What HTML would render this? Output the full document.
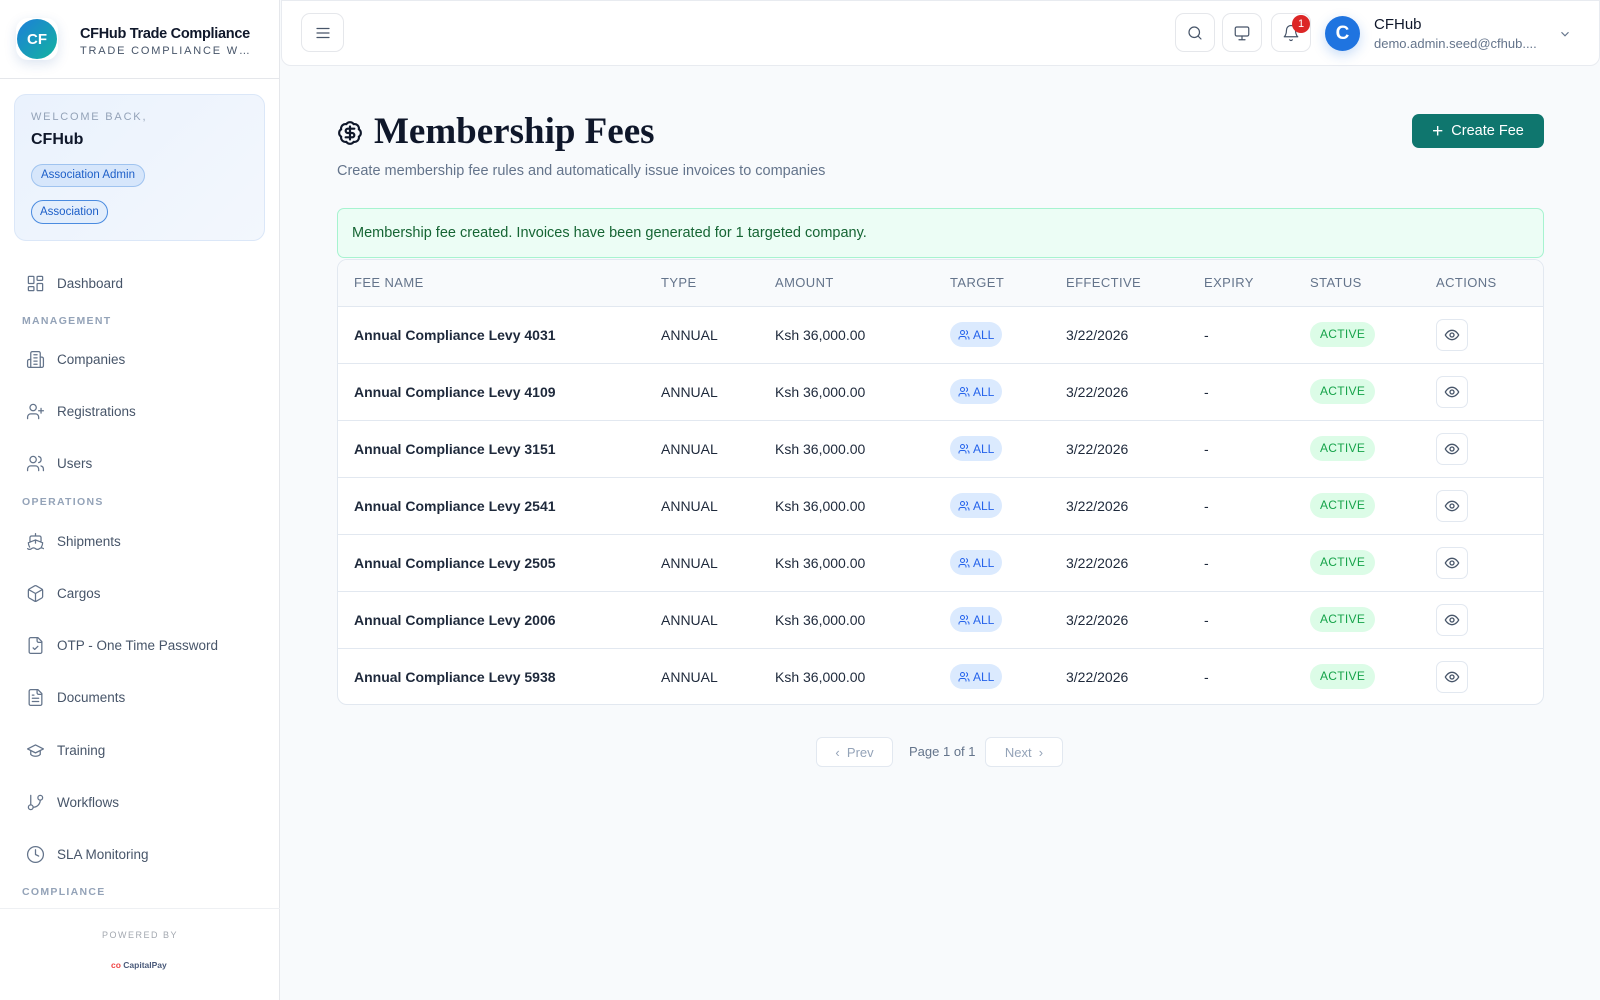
<!DOCTYPE html>
<html><head><meta charset="utf-8">
<style>
*{box-sizing:border-box;margin:0;padding:0}
body{width:1600px;height:1000px;overflow:hidden;background:#f8fafc;font-family:"Liberation Sans",sans-serif;color:#0f172a;position:relative}
.abs{position:absolute}
.sb{position:absolute;left:0;top:0;width:280px;height:1000px;background:#fff;border-right:1px solid #e5e7eb}
.nav{position:absolute;left:26px;display:flex;align-items:center;font-size:13.5px;color:#475569}
.nav svg{width:19px;height:19px;margin-right:12px;stroke:#64748b;fill:none;stroke-width:1.6;stroke-linecap:round;stroke-linejoin:round}
.sec{position:absolute;left:22px;font-size:10.5px;letter-spacing:1.3px;color:#94a3b8;font-weight:bold}
.ib{position:absolute;top:13px;width:40px;height:39px;border:1px solid #e5e7eb;border-radius:9px;background:#fff;display:flex;align-items:center;justify-content:center}
.ib svg{width:18px;height:18px;stroke:#475569;fill:none;stroke-width:1.6;stroke-linecap:round;stroke-linejoin:round}
table{border-collapse:collapse;width:100%}
th{height:46px;text-align:left;font-size:13px;color:#64748b;font-weight:normal;letter-spacing:.4px;background:#f8fafc;border-bottom:1px solid #e2e8f0}
td{height:57px;font-size:14px;color:#1e293b;border-bottom:1px solid #e2e8f0}
tr:last-child td{border-bottom:none}
.all{display:inline-flex;align-items:center;background:#dbeafe;color:#2563eb;font-size:12px;padding:0 8px;height:25px;border-radius:13px}
.all svg{margin-right:3px}
.act{display:inline-block;background:#dcfce7;color:#16a34a;font-size:12px;padding:0 10px;height:25px;line-height:25px;border-radius:13px;letter-spacing:.3px}
.eye{width:32px;height:32px;border:1px solid #e2e8f0;border-radius:7px;display:flex;align-items:center;justify-content:center;background:#fff}
</style></head><body>
<div class="sb">
  <div class="abs" style="left:16px;top:18px;width:42px;height:42px;border-radius:12px;background:#fff;box-shadow:0 4px 12px rgba(30,80,160,.15)"></div>
  <div class="abs" style="left:17px;top:19px;width:40px;height:40px;border-radius:50%;background:linear-gradient(135deg,#1d7fd8,#13b3a0);color:#fff;font-weight:bold;font-size:15px;display:flex;align-items:center;justify-content:center">CF</div>
  <div class="abs" style="left:80px;top:26px;font-size:14.5px;letter-spacing:-.3px;color:#0f172a;font-weight:bold">CFHub Trade Compliance</div>
  <div class="abs" style="left:80px;top:45px;font-size:11px;letter-spacing:1.8px;color:#475569">TRADE COMPLIANCE W…</div>
  <div class="abs" style="left:0;top:78px;width:280px;height:1px;background:#e5e7eb"></div>
  <div class="abs" style="left:14px;top:94px;width:251px;height:147px;border:1px solid #dbe7f8;border-radius:12px;background:linear-gradient(135deg,#eaf2fd,#f3f7fd)"></div>
  <div class="abs" style="left:31px;top:111px;font-size:11px;letter-spacing:1.8px;color:#94a3b8">WELCOME BACK,</div>
  <div class="abs" style="left:31px;top:131px;font-size:16px;font-weight:bold">CFHub</div>
  <div class="abs" style="left:31px;top:164px;height:23px;padding:0 9px;border:1px solid #9fc3ef;border-radius:12px;background:#d6e6fb;color:#1d5fc8;font-size:11.5px;line-height:21px">Association Admin</div>
  <div class="abs" style="left:31px;top:200px;height:24px;padding:0 8px;border:1px solid #4a8be0;border-radius:12px;background:#e3eefc;color:#1d5fc8;font-size:11.5px;line-height:22px">Association</div>

  <div class="nav" style="top:274px"><svg viewBox="0 0 24 24"><rect x="3" y="3" width="7" height="9" rx="1"/><rect x="14" y="3" width="7" height="5" rx="1"/><rect x="14" y="12" width="7" height="9" rx="1"/><rect x="3" y="16" width="7" height="5" rx="1"/></svg>Dashboard</div>
  <div class="sec" style="top:315px">MANAGEMENT</div>
  <div class="nav" style="top:350px"><svg viewBox="0 0 24 24"><path d="M6 22V4a2 2 0 0 1 2-2h8a2 2 0 0 1 2 2v18Z"/><path d="M6 12H4a2 2 0 0 0-2 2v6a2 2 0 0 0 2 2h2M18 9h2a2 2 0 0 1 2 2v9a2 2 0 0 1-2 2h-2M10 6h4M10 10h4M10 14h4M10 18h4"/></svg>Companies</div>
  <div class="nav" style="top:402px"><svg viewBox="0 0 24 24"><path d="M16 21v-2a4 4 0 0 0-4-4H6a4 4 0 0 0-4 4v2"/><circle cx="9" cy="7" r="4"/><path d="M19 8v6M22 11h-6"/></svg>Registrations</div>
  <div class="nav" style="top:454px"><svg viewBox="0 0 24 24"><path d="M16 21v-2a4 4 0 0 0-4-4H6a4 4 0 0 0-4 4v2"/><circle cx="9" cy="7" r="4"/><path d="M22 21v-2a4 4 0 0 0-3-3.9M16 3.1a4 4 0 0 1 0 7.8"/></svg>Users</div>
  <div class="sec" style="top:496px">OPERATIONS</div>
  <div class="nav" style="top:532px"><svg viewBox="0 0 24 24"><path d="M2 21c.6.5 1.2 1 2.5 1 2.5 0 2.5-2 5-2 1.3 0 1.9.5 2.5 1s1.2 1 2.5 1c2.5 0 2.5-2 5-2 1.3 0 1.9.5 2.5 1"/><path d="M19.4 19a10 10 0 0 0 1.6-5.5L12 10l-9 3.5A10 10 0 0 0 4.6 19M19 13V7a2 2 0 0 0-2-2H7a2 2 0 0 0-2 2v6M12 10v4M12 2v3"/></svg>Shipments</div>
  <div class="nav" style="top:584px"><svg viewBox="0 0 24 24"><path d="M21 8a2 2 0 0 0-1-1.7l-7-4a2 2 0 0 0-2 0l-7 4A2 2 0 0 0 3 8v8a2 2 0 0 0 1 1.7l7 4a2 2 0 0 0 2 0l7-4a2 2 0 0 0 1-1.7Z"/><path d="M3.3 7 12 12l8.7-5M12 22V12"/></svg>Cargos</div>
  <div class="nav" style="top:636px"><svg viewBox="0 0 24 24"><path d="M15 2H6a2 2 0 0 0-2 2v16a2 2 0 0 0 2 2h12a2 2 0 0 0 2-2V7Z"/><path d="M14 2v4a2 2 0 0 0 2 2h4M9 15l2 2 4-4"/></svg>OTP - One Time Password</div>
  <div class="nav" style="top:688px"><svg viewBox="0 0 24 24"><path d="M15 2H6a2 2 0 0 0-2 2v16a2 2 0 0 0 2 2h12a2 2 0 0 0 2-2V7Z"/><path d="M14 2v4a2 2 0 0 0 2 2h4M10 9H8M16 13H8M16 17H8"/></svg>Documents</div>
  <div class="nav" style="top:741px"><svg viewBox="0 0 24 24"><path d="M22 10 12 5 2 10l10 5 10-5Z"/><path d="M6 12v5c3 3 9 3 12 0v-5"/></svg>Training</div>
  <div class="nav" style="top:793px"><svg viewBox="0 0 24 24"><path d="M6 3v12"/><circle cx="18" cy="6" r="3"/><circle cx="6" cy="18" r="3"/><path d="M18 9a9 9 0 0 1-9 9"/></svg>Workflows</div>
  <div class="nav" style="top:845px"><svg viewBox="0 0 24 24"><circle cx="12" cy="12" r="10"/><path d="M12 6v6l4 2"/></svg>SLA Monitoring</div>
  <div class="sec" style="top:886px">COMPLIANCE</div>
  <div class="abs" style="left:0;top:908px;width:280px;height:1px;background:#eef0f3"></div>
  <div class="abs" style="left:0;top:930px;width:280px;text-align:center;font-size:9px;letter-spacing:1.5px;color:#a3a8b0">POWERED BY</div>
  <div class="abs" style="left:111px;top:960px;font-size:8.5px;font-weight:bold;color:#4a5a7a"><span style="color:#ef4444">co</span> CapitalPay</div>
</div>

<div class="abs" style="left:281px;top:0;width:1319px;height:66px;background:#fff;border:1px solid #e8ebf0;border-radius:0 0 10px 10px"></div>
<div class="ib" style="left:301px;width:43px"><svg viewBox="0 0 24 24"><path d="M4 6h16M4 12h16M4 18h16"/></svg></div>
<div class="ib" style="left:1175px"><svg viewBox="0 0 24 24"><circle cx="11" cy="11" r="7"/><path d="m20 20-4-4"/></svg></div>
<div class="ib" style="left:1222px"><svg viewBox="0 0 24 24"><rect x="3" y="4" width="18" height="12" rx="2"/><path d="M8 21h8M12 16v5"/></svg></div>
<div class="ib" style="left:1271px"><svg viewBox="0 0 24 24"><path d="M6 8a6 6 0 0 1 12 0c0 7 3 9 3 9H3s3-2 3-9"/><path d="M10.3 21a1.9 1.9 0 0 0 3.4 0"/></svg></div>
<div class="abs" style="left:1292px;top:15px;width:18px;height:18px;border-radius:50%;background:#dc2626;color:#fff;font-size:11px;text-align:center;line-height:18px">1</div>
<div class="abs" style="left:1325px;top:16px;width:35px;height:35px;border-radius:50%;background:#1f74e0;color:#fff;font-size:19px;font-weight:bold;text-align:center;line-height:35px;box-shadow:0 4px 12px rgba(31,116,224,.25)">C</div>
<div class="abs" style="left:1374px;top:16px;font-size:15px;color:#0f172a">CFHub</div>
<div class="abs" style="left:1374px;top:36px;font-size:13px;color:#64748b">demo.admin.seed@cfhub....</div>
<svg class="abs" style="left:1558px;top:27px" width="14" height="14" viewBox="0 0 24 24" fill="none" stroke="#64748b" stroke-width="2"><path d="m6 9 6 6 6-6"/></svg>

<svg class="abs" style="left:337px;top:120px" width="26" height="26" viewBox="0 0 24 24" fill="none" stroke="#0f172a" stroke-width="2" stroke-linecap="round" stroke-linejoin="round"><path d="M3.85 8.62a4 4 0 0 1 4.78-4.77 4 4 0 0 1 6.74 0 4 4 0 0 1 4.78 4.78 4 4 0 0 1 0 6.74 4 4 0 0 1-4.77 4.78 4 4 0 0 1-6.75 0 4 4 0 0 1-4.78-4.77 4 4 0 0 1 0-6.76Z"/><path d="M16 8h-6a2 2 0 1 0 0 4h4a2 2 0 1 1 0 4H8M12 18V6"/></svg>
<div class="abs" style="left:374px;top:110px;font-family:'Liberation Serif',serif;font-weight:bold;font-size:37px;color:#0f172a;letter-spacing:0">Membership Fees</div>
<div class="abs" style="left:337px;top:163px;font-size:14.5px;color:#64748b">Create membership fee rules and automatically issue invoices to companies</div>
<div class="abs" style="left:1412px;top:114px;width:132px;height:34px;border-radius:7px;background:#0f766e;color:#fff;font-size:14.5px;display:flex;align-items:center;justify-content:center"><span style="font-size:19px;margin-right:8px;line-height:1">+</span>Create Fee</div>

<div class="abs" style="left:337px;top:208px;width:1207px;height:50px;border:1px solid #a7f3d0;border-radius:7px;background:#ecfdf5;color:#166534;font-size:14.5px;padding-left:14px;line-height:48px">Membership fee created. Invoices have been generated for 1 targeted company.</div>

<div class="abs" style="left:337px;top:259px;width:1207px;height:446px;border:1px solid #e2e8f0;border-radius:10px;background:#fff;overflow:hidden">
<table>
<colgroup><col style="width:323px"><col style="width:114px"><col style="width:175px"><col style="width:116px"><col style="width:138px"><col style="width:106px"><col style="width:126px"><col></colgroup>
<tr><th style="padding-left:16px">FEE NAME</th><th>TYPE</th><th>AMOUNT</th><th>TARGET</th><th>EFFECTIVE</th><th>EXPIRY</th><th>STATUS</th><th>ACTIONS</th></tr>
<tr><td style="padding-left:16px;font-weight:bold">Annual Compliance Levy 4031</td><td>ANNUAL</td><td>Ksh 36,000.00</td><td><span class="all"><svg width="12" height="12" viewBox="0 0 24 24" fill="none" stroke="#2563eb" stroke-width="2"><path d="M16 21v-2a4 4 0 0 0-4-4H6a4 4 0 0 0-4 4v2"/><circle cx="9" cy="7" r="4"/><path d="M22 21v-2a4 4 0 0 0-3-3.9M16 3.1a4 4 0 0 1 0 7.8"/></svg>ALL</span></td><td>3/22/2026</td><td>-</td><td><span class="act">ACTIVE</span></td><td><div class="eye"><svg width="16" height="16" viewBox="0 0 24 24" fill="none" stroke="#475569" stroke-width="2"><path d="M2 12s3.5-7 10-7 10 7 10 7-3.5 7-10 7S2 12 2 12Z"/><circle cx="12" cy="12" r="3"/></svg></div></td></tr>
<tr><td style="padding-left:16px;font-weight:bold">Annual Compliance Levy 4109</td><td>ANNUAL</td><td>Ksh 36,000.00</td><td><span class="all"><svg width="12" height="12" viewBox="0 0 24 24" fill="none" stroke="#2563eb" stroke-width="2"><path d="M16 21v-2a4 4 0 0 0-4-4H6a4 4 0 0 0-4 4v2"/><circle cx="9" cy="7" r="4"/><path d="M22 21v-2a4 4 0 0 0-3-3.9M16 3.1a4 4 0 0 1 0 7.8"/></svg>ALL</span></td><td>3/22/2026</td><td>-</td><td><span class="act">ACTIVE</span></td><td><div class="eye"><svg width="16" height="16" viewBox="0 0 24 24" fill="none" stroke="#475569" stroke-width="2"><path d="M2 12s3.5-7 10-7 10 7 10 7-3.5 7-10 7S2 12 2 12Z"/><circle cx="12" cy="12" r="3"/></svg></div></td></tr>
<tr><td style="padding-left:16px;font-weight:bold">Annual Compliance Levy 3151</td><td>ANNUAL</td><td>Ksh 36,000.00</td><td><span class="all"><svg width="12" height="12" viewBox="0 0 24 24" fill="none" stroke="#2563eb" stroke-width="2"><path d="M16 21v-2a4 4 0 0 0-4-4H6a4 4 0 0 0-4 4v2"/><circle cx="9" cy="7" r="4"/><path d="M22 21v-2a4 4 0 0 0-3-3.9M16 3.1a4 4 0 0 1 0 7.8"/></svg>ALL</span></td><td>3/22/2026</td><td>-</td><td><span class="act">ACTIVE</span></td><td><div class="eye"><svg width="16" height="16" viewBox="0 0 24 24" fill="none" stroke="#475569" stroke-width="2"><path d="M2 12s3.5-7 10-7 10 7 10 7-3.5 7-10 7S2 12 2 12Z"/><circle cx="12" cy="12" r="3"/></svg></div></td></tr>
<tr><td style="padding-left:16px;font-weight:bold">Annual Compliance Levy 2541</td><td>ANNUAL</td><td>Ksh 36,000.00</td><td><span class="all"><svg width="12" height="12" viewBox="0 0 24 24" fill="none" stroke="#2563eb" stroke-width="2"><path d="M16 21v-2a4 4 0 0 0-4-4H6a4 4 0 0 0-4 4v2"/><circle cx="9" cy="7" r="4"/><path d="M22 21v-2a4 4 0 0 0-3-3.9M16 3.1a4 4 0 0 1 0 7.8"/></svg>ALL</span></td><td>3/22/2026</td><td>-</td><td><span class="act">ACTIVE</span></td><td><div class="eye"><svg width="16" height="16" viewBox="0 0 24 24" fill="none" stroke="#475569" stroke-width="2"><path d="M2 12s3.5-7 10-7 10 7 10 7-3.5 7-10 7S2 12 2 12Z"/><circle cx="12" cy="12" r="3"/></svg></div></td></tr>
<tr><td style="padding-left:16px;font-weight:bold">Annual Compliance Levy 2505</td><td>ANNUAL</td><td>Ksh 36,000.00</td><td><span class="all"><svg width="12" height="12" viewBox="0 0 24 24" fill="none" stroke="#2563eb" stroke-width="2"><path d="M16 21v-2a4 4 0 0 0-4-4H6a4 4 0 0 0-4 4v2"/><circle cx="9" cy="7" r="4"/><path d="M22 21v-2a4 4 0 0 0-3-3.9M16 3.1a4 4 0 0 1 0 7.8"/></svg>ALL</span></td><td>3/22/2026</td><td>-</td><td><span class="act">ACTIVE</span></td><td><div class="eye"><svg width="16" height="16" viewBox="0 0 24 24" fill="none" stroke="#475569" stroke-width="2"><path d="M2 12s3.5-7 10-7 10 7 10 7-3.5 7-10 7S2 12 2 12Z"/><circle cx="12" cy="12" r="3"/></svg></div></td></tr>
<tr><td style="padding-left:16px;font-weight:bold">Annual Compliance Levy 2006</td><td>ANNUAL</td><td>Ksh 36,000.00</td><td><span class="all"><svg width="12" height="12" viewBox="0 0 24 24" fill="none" stroke="#2563eb" stroke-width="2"><path d="M16 21v-2a4 4 0 0 0-4-4H6a4 4 0 0 0-4 4v2"/><circle cx="9" cy="7" r="4"/><path d="M22 21v-2a4 4 0 0 0-3-3.9M16 3.1a4 4 0 0 1 0 7.8"/></svg>ALL</span></td><td>3/22/2026</td><td>-</td><td><span class="act">ACTIVE</span></td><td><div class="eye"><svg width="16" height="16" viewBox="0 0 24 24" fill="none" stroke="#475569" stroke-width="2"><path d="M2 12s3.5-7 10-7 10 7 10 7-3.5 7-10 7S2 12 2 12Z"/><circle cx="12" cy="12" r="3"/></svg></div></td></tr>
<tr><td style="padding-left:16px;font-weight:bold">Annual Compliance Levy 5938</td><td>ANNUAL</td><td>Ksh 36,000.00</td><td><span class="all"><svg width="12" height="12" viewBox="0 0 24 24" fill="none" stroke="#2563eb" stroke-width="2"><path d="M16 21v-2a4 4 0 0 0-4-4H6a4 4 0 0 0-4 4v2"/><circle cx="9" cy="7" r="4"/><path d="M22 21v-2a4 4 0 0 0-3-3.9M16 3.1a4 4 0 0 1 0 7.8"/></svg>ALL</span></td><td>3/22/2026</td><td>-</td><td><span class="act">ACTIVE</span></td><td><div class="eye"><svg width="16" height="16" viewBox="0 0 24 24" fill="none" stroke="#475569" stroke-width="2"><path d="M2 12s3.5-7 10-7 10 7 10 7-3.5 7-10 7S2 12 2 12Z"/><circle cx="12" cy="12" r="3"/></svg></div></td></tr>
</table>
</div>

<div class="abs" style="left:816px;top:737px;width:77px;height:30px;border:1px solid #e2e8f0;border-radius:6px;background:#fff;color:#94a3b8;font-size:13px;display:flex;align-items:center;justify-content:center">&#8249;&nbsp;&nbsp;Prev</div>
<div class="abs" style="left:909px;top:744px;font-size:13px;color:#64748b">Page 1 of 1</div>
<div class="abs" style="left:985px;top:737px;width:78px;height:30px;border:1px solid #e2e8f0;border-radius:6px;background:#fff;color:#94a3b8;font-size:13px;display:flex;align-items:center;justify-content:center">Next&nbsp;&nbsp;&#8250;</div>
</body></html>
